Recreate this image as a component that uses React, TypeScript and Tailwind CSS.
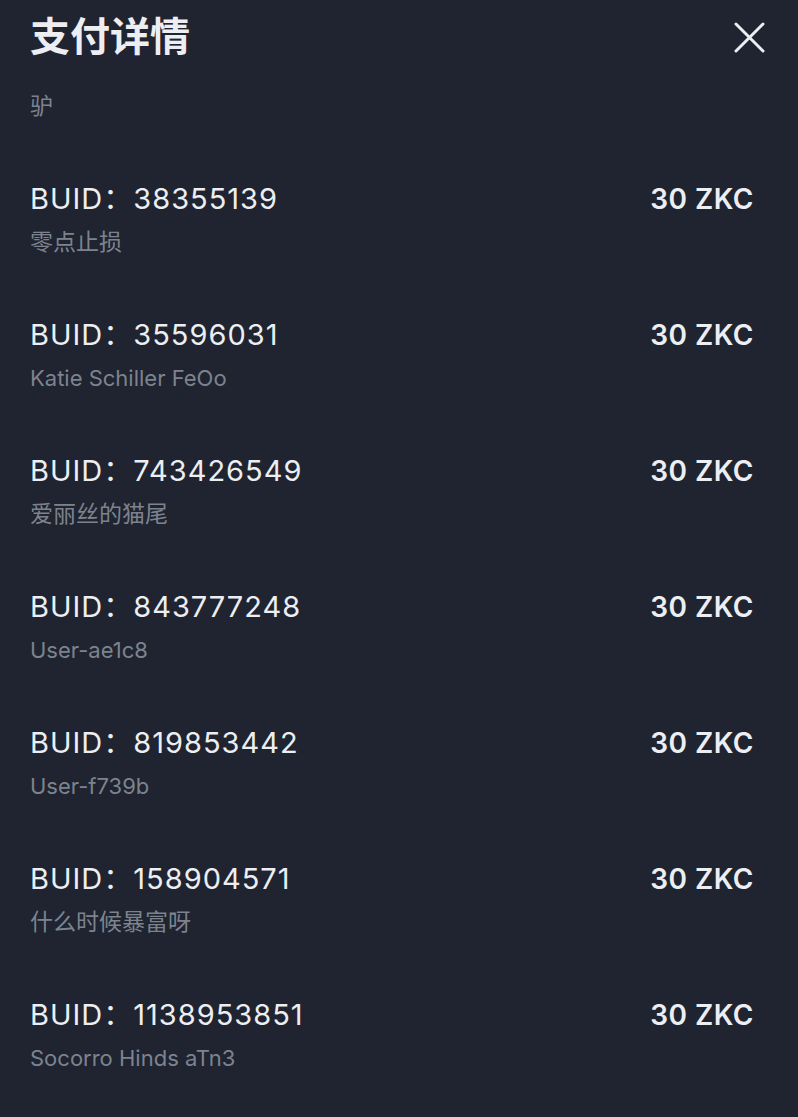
const rows = [
  { id: "38355139", name: "零点止损", cjk: true },
  { id: "35596031", name: "Katie Schiller FeOo", cjk: false },
  { id: "743426549", name: "爱丽丝的猫尾", cjk: true },
  { id: "843777248", name: "User-ae1c8", cjk: false },
  { id: "819853442", name: "User-f739b", cjk: false },
  { id: "158904571", name: "什么时候暴富呀", cjk: true },
  { id: "1138953851", name: "Socorro Hinds aTn3", cjk: false },
];

const font = {
  fontFamily: '"Inter", "Noto Sans CJK SC", sans-serif',
};

export default function App() {
  return (
    <div
      className="w-[798px] h-[1117px] overflow-hidden bg-[#1f2430] text-[#eceef2]"
      style={font}
    >
      {/* Header */}
      <div className="flex items-center justify-between pl-[30px] pr-[33px] pt-[12px] h-[62px]">
        <h1 className="text-[40px] leading-[50px] font-bold">支付详情</h1>
        <button aria-label="Close">
          <svg width="31" height="31" viewBox="0 0 31 31" className="text-[#eceef2]">
            <path d="M2 2L29 29M29 2L2 29" stroke="currentColor" strokeWidth="3" strokeLinecap="round" />
          </svg>
        </button>
      </div>

      <div className="pl-[30px] pr-[44px]">
        <p className="text-[23px] leading-[28px] text-[#7d838e] mt-[30px]">驴</p>

        <div className="flex flex-col">
          {rows.map((r) => (
            <div key={r.id} className="pt-[61px]">
              <div className="flex items-center justify-between h-[36px]">
                <span className="text-[29px] tracking-[1px]">BUID：{r.id}</span>
                <span className="text-[28px] font-semibold tracking-[0.5px]">30 ZKC</span>
              </div>
              <p
                className={
                  r.cjk
                    ? "text-[23px] leading-[28px] mt-[11px] text-[#7d838e]"
                    : "text-[22px] leading-[28px] mt-[11px] text-[#7d838e]"
                }
              >
                {r.name}
              </p>
            </div>
          ))}
        </div>
      </div>
    </div>
  );
}
